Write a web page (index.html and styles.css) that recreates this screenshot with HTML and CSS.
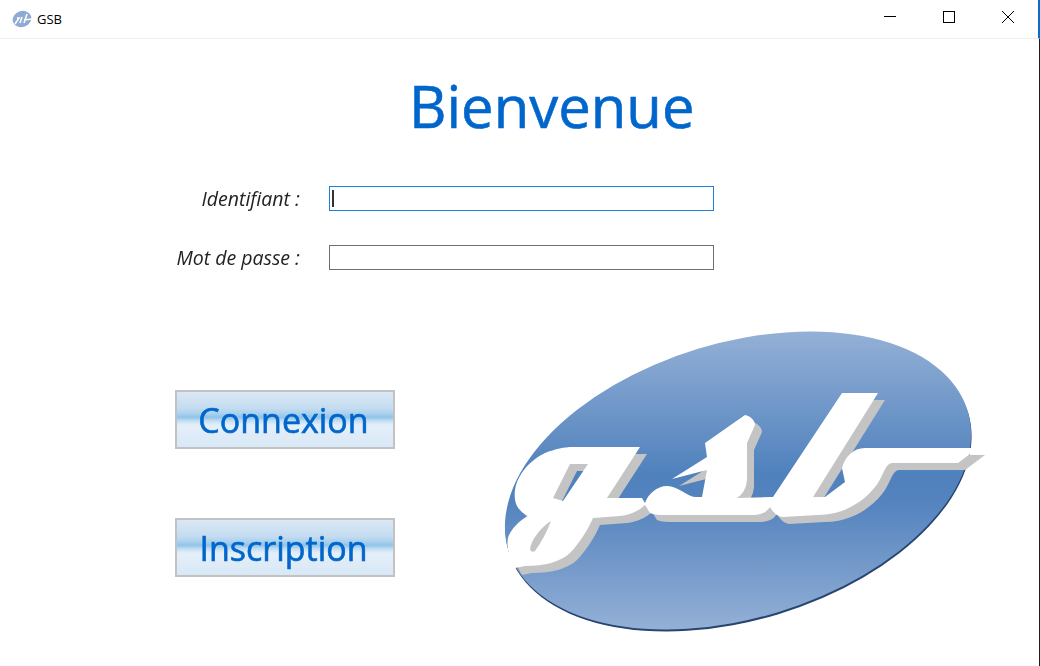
FILE: index.html
```html
<!DOCTYPE html>
<html lang="fr">
<head>
    <meta charset="UTF-8">
    <meta name="viewport" content="width=device-width, initial-scale=1.0">
    <title>GSB</title>
    <link rel="stylesheet" href="styles.css">
</head>
<body>
    <header class="titlebar">
        <svg class="app-icon" width="20" height="20" viewBox="0 0 20 20">
            <ellipse cx="10" cy="10" rx="9.5" ry="8" transform="rotate(-20 10 10)" fill="#8dabd3"/>
            <path d="M3 15 L7 9 H5 M8 14 L10 8 M12 14 L15 5 M12 11 L20 10" stroke="#fff" stroke-width="1.6" fill="none"/>
        </svg>
        <span class="app-name">GSB</span>
        <div class="window-buttons">
            <svg class="win-btn" width="58" height="38" viewBox="0 0 58 38"><path d="M25 16.5 H37" stroke="#000" fill="none"/></svg>
            <svg class="win-btn" width="58" height="38" viewBox="0 0 58 38"><rect x="26.5" y="11.5" width="11" height="11" stroke="#000" fill="none"/></svg>
            <svg class="win-btn" width="58" height="38" viewBox="0 0 58 38"><path d="M27 11 L39 23 M39 11 L27 23" stroke="#000" fill="none"/></svg>
        </div>
    </header>

    <div class="window-body">
        <main class="content">
            <h1 class="welcome">Bienvenue</h1>

            <form class="login-form">
                <label class="form-label">Identifiant :</label>
                <div class="field active"><span class="caret"></span></div>
                <label class="form-label">Mot de passe :</label>
                <div class="field"></div>
            </form>

            <section class="bottom">
                <div class="actions">
                    <button type="button" class="action-btn">Connexion</button>
                    <button type="button" class="action-btn">Inscription</button>
                </div>
                <svg class="logo" width="490" height="310" viewBox="500 328 490 310">
                    <defs>
                        <linearGradient id="oval" gradientUnits="userSpaceOnUse" x1="0" y1="332" x2="0" y2="630">
                            <stop offset="0" stop-color="#94b0d6"/>
                            <stop offset="0.48" stop-color="#4f81bd"/>
                            <stop offset="0.58" stop-color="#5584bf"/>
                            <stop offset="1" stop-color="#94b0d6"/>
                        </linearGradient>
                        <clipPath id="oval-clip">
                            <ellipse cx="738" cy="480.5" rx="240" ry="137.6" transform="rotate(-16.9 738 480.5)"/>
                        </clipPath>
                        <path id="letters" fill-rule="evenodd" d="M572 447 L640 447 L607 498 L642 498 L645 503 C648 494 657 486 667 486 C678 486 688 497 695 497 L702 497 L707 470 L672 479 L707 457 L705 443 L745 415 C750 416 755 420 755 425 L747 443 L747 480 Q746 492 737 498 L773 497 L842 393 L878 393 L813 497 L825 497 L845 482 L842 468 C845 457 853 448 865 448 L978 448 L958 463 L892 463 C885 463 883 478 875 487 C865 500 845 515 818 515 L782 517 Q775 516 770 507 Q765 515 753 515 L667 515 C660 515 655 515 650 513 L645 505 C640 510 630 515 620 516 L593 518 C588 530 578 545 570 553 C560 562 545 566 525 566 L515 568 C510 560 506 548 508 538 C510 530 520 520 528 516 C520 512 513 505 515 490 C517 475 530 460 545 453 C555 449 565 447 572 447 Z M570 464 L588 464 L563 501 L553 498 Z"/>
                    </defs>
                    <ellipse cx="738.5" cy="482.5" rx="240" ry="137.6" transform="rotate(-16.9 738.5 482.5)" fill="#27456f"/>
                    <rect x="500" y="328" width="490" height="310" fill="url(#oval)" clip-path="url(#oval-clip)"/>
                    <use href="#letters" x="7" y="7" fill="#c4c4c4"/>
                    <use href="#letters" fill="#fff"/>
                    <path d="M551 521 C541 527 531 540 530 549 Q531 553 535 551 Q545 537 551 521 Z" fill="#c4c4c4"/>
                </svg>
            </section>
        </main>
    </div>
</body>
</html>
```

FILE: styles.css
```css
html, body {
    margin: 0;
    height: 100%;
    overflow: hidden;
    background-color: #fff;
}
body {
    display: flex;
    flex-direction: column;
    font-family: "Open Sans", "Noto Sans", sans-serif;
}
.titlebar {
    display: flex;
    align-items: center;
    flex: none;
    height: 38px;
    padding-left: 12px;
    border-bottom: 1px solid #f0f0f0;
    border-right: 2px solid #0a6ccb;
}
.app-icon {
    margin-right: 5px;
    filter: blur(0.5px);
}
.app-name {
    font-size: 13px;
    color: #000;
}
.window-buttons {
    display: flex;
    margin-left: auto;
    padding-right: 5px;
}
.win-btn {
    display: block;
}
.window-body {
    flex: 1;
    border-right: 1px solid #1c1c1c;
}
.content {
    filter: blur(0.4px);
}
.welcome {
    margin: 0 0 0 409px;
    padding-top: 29px;
    font-size: 58px;
    line-height: 76px;
    font-weight: 500;
    -webkit-text-stroke: 0.6px #0066cc;
    color: #0066cc;
}
.login-form {
    display: grid;
    grid-template-columns: 125px 385px;
    grid-auto-rows: 25px;
    column-gap: 29px;
    row-gap: 34px;
    align-items: center;
    margin: 42px 0 0 175px;
}
.form-label {
    text-align: right;
    font-size: 19.5px;
    font-style: italic;
    white-space: nowrap;
    color: #222;
}
.field {
    display: flex;
    align-items: center;
    box-sizing: border-box;
    height: 25px;
    padding-left: 2px;
    border: 1px solid #6f6f6f;
}
.field.active {
    border-color: #1f80d8;
}
.caret {
    width: 2px;
    height: 17px;
    background-color: #333;
}
.bottom {
    display: flex;
    margin-top: 58px;
}
.actions {
    display: flex;
    flex-direction: column;
    gap: 69px;
    padding: 62px 0 0 175px;
}
.action-btn {
    box-sizing: border-box;
    width: 220px;
    height: 59px;
    padding: 0 3px 0 0;
    border: 2px solid #c2c2c2;
    background: linear-gradient(#dbe8f4 0%, #c3dcf0 30%, #a8d0ee 40%, #8fc4ea 46%, #c0dcf2 52%, #e4eff9 60%, #d8e8f6 100%);
    font-family: "Open Sans", "Noto Sans", sans-serif;
    font-size: 34px;
    font-weight: 500;
    -webkit-text-stroke: 0.6px #0066cc;
    color: #0066cc;
    cursor: pointer;
}
.logo {
    display: block;
    margin-left: 105px;
}
```
